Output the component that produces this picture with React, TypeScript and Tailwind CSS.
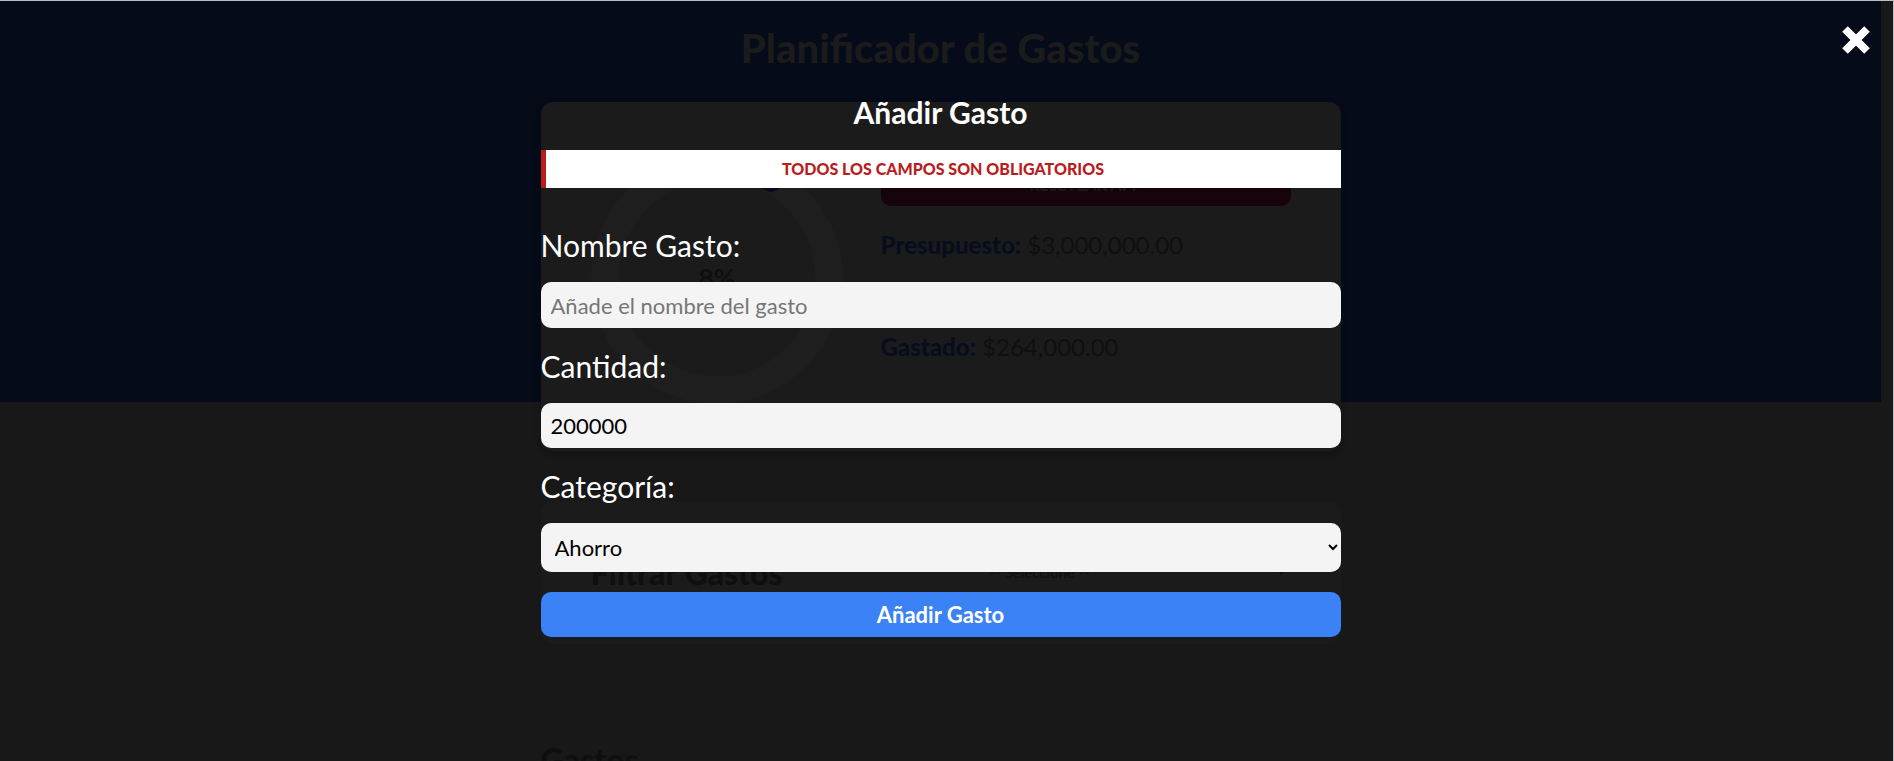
import { useState } from 'react'

const font = "font-['Lato','Liberation_Sans',sans-serif]"

function Progress({ pct }: { pct: number }) {
  const r = 44.5
  const c = 2 * Math.PI * r
  return (
    <svg viewBox="0 0 100 100" className="w-[252px] h-[252px]">
      <circle cx="50" cy="50" r={r} fill="none" stroke="#1e1e1e" strokeWidth="11" />
      <circle
        cx="50"
        cy="50"
        r={r}
        fill="none"
        stroke="#060d1c"
        strokeWidth="9.5"
        strokeLinecap="round"
        strokeDasharray={`${(c * pct) / 100} ${c}`}
        transform="rotate(-90 50 50)"
      />
      <text
        x="50"
        y="50"
        textAnchor="middle"
        dominantBaseline="central"
        fontSize="10.5"
        fontWeight="700"
        fill="#0f0f0f"
      >
        {pct}%
      </text>
    </svg>
  )
}

function BackgroundPage() {
  return (
    <div className="min-h-[761px] bg-[#181818] pr-[12px]">
      {/* header */}
      <header className="bg-[#050b18] h-[401px] pt-[23px]">
        <h1 className="text-center text-[40px] leading-[48px] font-black text-[#1b1b1b]">
          Planificador de Gastos
        </h1>
        <div className="relative mx-auto w-[800px] mt-[30px] h-[349px] rounded-xl bg-[#1b1b1b] p-[50px] flex gap-[38px] shadow-[0_3px_6px_rgba(0,0,0,0.25)]">
          <Progress pct={8} />
          <div className="flex-1 pt-[12px]">
            <button className="w-full h-[42px] rounded-[10px] bg-[#16030b] text-[#1a1a1a] font-black uppercase text-[16px]">
              Resetear App
            </button>
            <div className="mt-[24px] flex flex-col gap-[22px] text-[24px] leading-[29px] text-[#0f0f0f]">
              <p>
                <span className="font-black text-[#060d1c]">Presupuesto:</span> $3,000,000.00
              </p>
              <p>
                <span className="font-black text-[#060d1c]">Disponible:</span> $2,736,000.00
              </p>
              <p>
                <span className="font-black text-[#060d1c]">Gastado:</span> $264,000.00
              </p>
            </div>
          </div>
        </div>
      </header>

      <main className="mx-auto w-[800px] pt-[99px]">
        <div className="h-[143px] rounded-xl bg-[#1b1b1b] px-[50px] flex items-center gap-[198px]">
          <span className="text-[32px] font-black text-[#0f0f0f] leading-[38px]">Filtrar Gastos</span>
          <div className="flex-1 flex items-center justify-between pl-[9px] pr-[4px] text-[15px] text-[#0f0f0f]">
            <span>-- Seleccione --</span>
            <span className="text-[10px]">&#9660;</span>
          </div>
        </div>
        <h2 className="mt-[97px] text-[32px] font-black leading-[38px] text-[#0f0f0f]">Gastos</h2>
      </main>
    </div>
  )
}

function CloseIcon() {
  return (
    <svg viewBox="0 0 30 30" className="w-[30px] h-[30px]">
      <line x1="4" y1="4" x2="26" y2="26" stroke="white" strokeWidth="8" />
      <line x1="26" y1="4" x2="4" y2="26" stroke="white" strokeWidth="8" />
    </svg>
  )
}

export default function App() {
  const [nombre, setNombre] = useState('')
  const [cantidad, setCantidad] = useState('200000')
  const [categoria, setCategoria] = useState('ahorro')

  return (
    <div className={`relative h-[761px] overflow-hidden border-t border-r border-[#b9c0c8] ${font}`}>
      <BackgroundPage />

      {/* modal */}
      <div className="absolute inset-0 z-20 pr-[12px]">
        <button className="absolute top-[24px] right-[22px]">
          <CloseIcon />
        </button>

        <form className="mx-auto w-[800px] mt-[93px]" onSubmit={(e) => e.preventDefault()}>
          <legend className="w-full text-center text-white font-bold text-[30px] leading-[36px]">
            Añadir Gasto
          </legend>

          <div className="mt-[20px] bg-white border-l-[5px] border-[#b91c1c] h-[38px] flex items-center justify-center text-[#b91c1c] font-black uppercase text-[16px]">
            Todos los campos son obligatorios
          </div>

          <div className="mt-[39px] flex flex-col gap-[20px]">
            <div className="flex flex-col gap-[19px]">
              <label className="block text-white text-[30px] leading-[36px]">Nombre Gasto:</label>
              <input
                type="text"
                value={nombre}
                onChange={(e) => setNombre(e.target.value)}
                placeholder="Añade el nombre del gasto"
                className="h-[46px] px-[10px] rounded-[10px] bg-[#f4f4f4] text-black text-[22px] outline-none placeholder:text-[#767676]"
              />
            </div>
            <div className="flex flex-col gap-[19px]">
              <label className="block text-white text-[30px] leading-[36px]">Cantidad:</label>
              <input
                type="number"
                value={cantidad}
                onChange={(e) => setCantidad(e.target.value)}
                className="h-[45px] px-[10px] rounded-[10px] bg-[#f4f4f4] text-black text-[22px] outline-none"
              />
            </div>
            <div className="flex flex-col gap-[19px]">
              <label className="block text-white text-[30px] leading-[36px]">Categoría:</label>
              <select
                value={categoria}
                onChange={(e) => setCategoria(e.target.value)}
                className="h-[49px] px-[10px] rounded-[10px] bg-[#f4f4f4] text-black text-[22px] outline-none"
              >
                <option value="">-- Seleccione --</option>
                <option value="ahorro">Ahorro</option>
                <option value="comida">Comida</option>
                <option value="casa">Casa</option>
                <option value="gastos">Gastos Varios</option>
                <option value="ocio">Ocio</option>
                <option value="salud">Salud</option>
                <option value="suscripciones">Suscripciones</option>
              </select>
            </div>
            <button
              type="submit"
              className="h-[45px] rounded-[10px] bg-[#3b82f6] text-white font-bold text-[22px]"
            >
              Añadir Gasto
            </button>
          </div>
        </form>
      </div>
    </div>
  )
}
